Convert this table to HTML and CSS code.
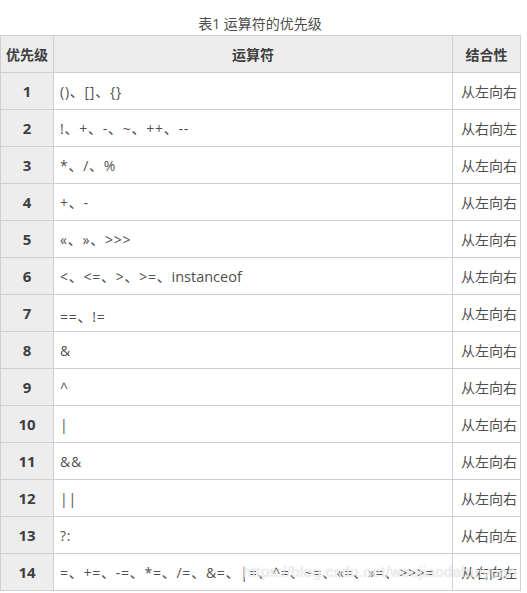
FILE: index.html
```html
<!DOCTYPE html>
<html lang="zh">
<head>
<meta charset="utf-8">
<link rel="stylesheet" href="styles.css">
</head>
<body>
<div class="wrap">
  <div class="caption">表1 运算符的优先级</div>
  <table class="ops">
    <colgroup><col class="c1"><col class="c2"><col class="c3"></colgroup>
    <thead>
      <tr><th>优先级</th><th>运算符</th><th>结合性</th></tr>
    </thead>
    <tbody>
      <tr><td class="n">1</td><td class="op">()、[]、{}</td><td class="as">从左向右</td></tr>
      <tr><td class="n">2</td><td class="op">!、+、-、~、++、--</td><td class="as">从右向左</td></tr>
      <tr><td class="n">3</td><td class="op">*、/、%</td><td class="as">从左向右</td></tr>
      <tr><td class="n">4</td><td class="op">+、-</td><td class="as">从左向右</td></tr>
      <tr><td class="n">5</td><td class="op">«、»、&gt;&gt;&gt;</td><td class="as">从左向右</td></tr>
      <tr><td class="n">6</td><td class="op">&lt;、&lt;=、&gt;、&gt;=、<span class="word">instanceof</span></td><td class="as">从左向右</td></tr>
      <tr><td class="n">7</td><td class="op low">==、!=</td><td class="as">从左向右</td></tr>
      <tr><td class="n">8</td><td class="op">&amp;</td><td class="as">从左向右</td></tr>
      <tr><td class="n">9</td><td class="op">^</td><td class="as">从左向右</td></tr>
      <tr><td class="n">10</td><td class="op">|</td><td class="as">从左向右</td></tr>
      <tr><td class="n">11</td><td class="op">&amp;&amp;</td><td class="as">从左向右</td></tr>
      <tr><td class="n">12</td><td class="op">||</td><td class="as">从左向右</td></tr>
      <tr><td class="n">13</td><td class="op">?:</td><td class="as">从右向左</td></tr>
      <tr><td class="n">14</td><td class="op">=、+=、-=、*=、/=、&amp;=、|=、^=、~=、«=、»=、&gt;&gt;&gt;=</td><td class="as">从右向左</td></tr>
    </tbody>
  </table>
  <div class="watermark">https://blog.csdn.net/woujiaodahuiyuan</div>
</div>
</body>
</html>
```

FILE: styles.css
```css
html, body {
  margin: 0;
  padding: 0;
  background: #fff;
}
body {
  font-family: "Open Sans", "Noto Sans CJK SC", sans-serif;
  color: #4f4f4f;
  font-size: 14px;
}
.wrap {
  position: relative;
  width: 520px;
}
.caption {
  text-align: center;
  height: 35px;
  line-height: 20px;
  padding-top: 14px;
  box-sizing: border-box;
  color: #4d4d4d;
  font-size: 14px;
}
.ops {
  border-collapse: collapse;
  table-layout: fixed;
  width: 520px;
}
.c1 { width: 53px; }
.c2 { width: 399px; }
.c3 { width: 68px; }
.ops th, .ops td {
  border: 1px solid #cfcfcf;
  height: 37px;
  padding: 0;
  box-sizing: border-box;
  white-space: nowrap;
  overflow: hidden;
}
.ops th {
  background: #ededed;
  font-weight: bold;
  color: #3f3f3f;
  text-align: center;
}
.ops td.n {
  background: #ededed;
  font-weight: bold;
  text-align: center;
  color: #3f3f3f;
  font-size: 15px;
}
.ops td.op {
  padding-left: 6px;
  letter-spacing: 0.75px;
}
.ops td.op .word {
  letter-spacing: 0;
  font-size: 14.5px;
}
.ops td.low {
  padding-top: 6px;
}
.ops td.as {
  text-align: left;
  padding-left: 8px;
  font-family: "Noto Sans CJK SC", sans-serif;
}
.watermark {
  position: absolute;
  left: 243px;
  top: 563px;
  font-size: 15px;
  color: rgba(255, 255, 255, 0.7);
  font-family: "Liberation Sans", sans-serif;
  text-shadow: 0 0 1px rgba(170, 170, 170, 0.7);
  letter-spacing: 0.4px;
  pointer-events: none;
}
```
